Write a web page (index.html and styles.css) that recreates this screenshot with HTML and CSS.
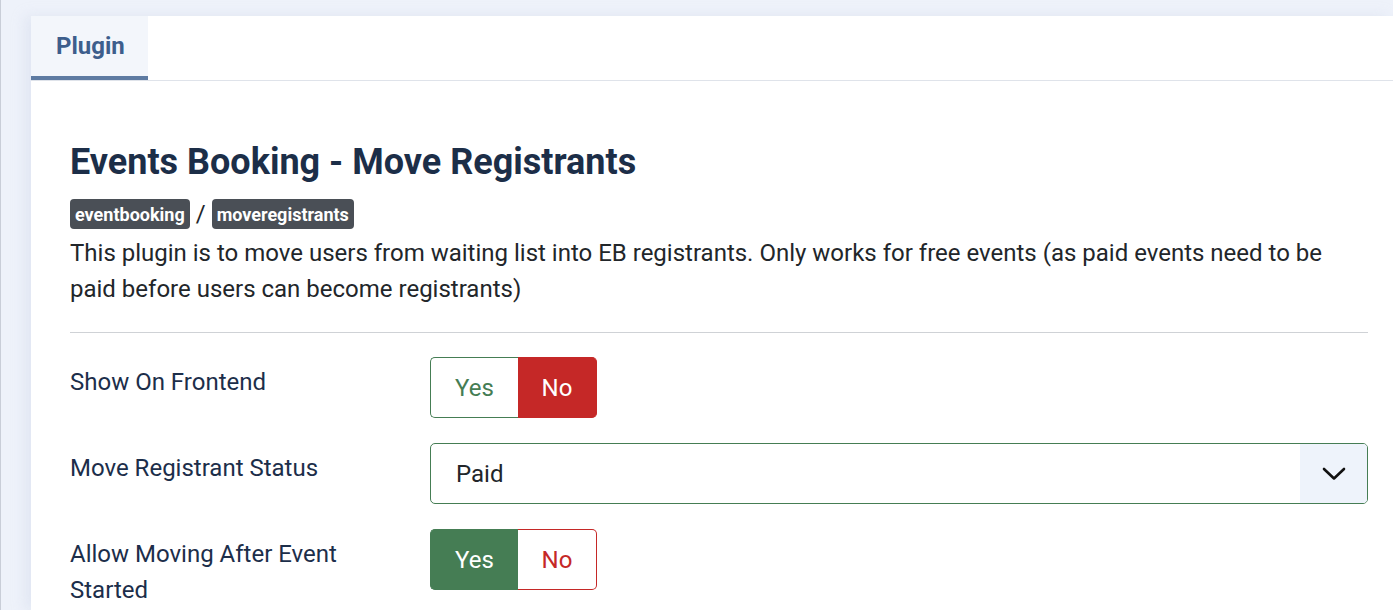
FILE: index.html
```html
<!DOCTYPE html>
<html lang="en">
<head>
<meta charset="utf-8">
<title>Events Booking - Move Registrants</title>
<link rel="stylesheet" href="styles.css">
</head>
<body>
<div class="page">
  <div class="card">
    <div class="tabs">
      <div class="tab active">Plugin</div>
    </div>
    <div class="content">
      <h2 class="title">Events Booking - Move Registrants</h2>
      <div class="badges">
        <span class="badge">eventbooking</span>
        <span class="slash">/</span>
        <span class="badge">moveregistrants</span>
      </div>
      <p class="desc">This plugin is to move users from waiting list into EB registrants. Only works for free events (as paid events need to be paid before users can become registrants)</p>
      <hr class="divider">
      <div class="form">
        <div class="label">Show On Frontend</div>
        <div class="control">
          <div class="switch">
            <span class="opt yes">Yes</span>
            <span class="opt no on">No</span>
          </div>
        </div>

        <div class="label">Move Registrant Status</div>
        <div class="control">
          <div class="select">
            <span class="select-value">Paid</span>
            <span class="select-arrow">
              <svg width="24" height="24" viewBox="0 0 24 24"><path d="M2 7 L12 16.5 L22 7" fill="none" stroke="#111" stroke-width="2.6" stroke-linecap="round" stroke-linejoin="round"/></svg>
            </span>
          </div>
        </div>

        <div class="label">Allow Moving After Event Started</div>
        <div class="control">
          <div class="switch switch-alt">
            <span class="opt yes on">Yes</span>
            <span class="opt no">No</span>
          </div>
        </div>
      </div>
    </div>
  </div>
</div>
</body>
</html>
```

FILE: styles.css
```css
html, body {
  margin: 0;
  padding: 0;
}
body {
  background: #eef2fa;
  font-family: Roboto, "Liberation Sans", Arial, sans-serif;
  color: #22262a;
  height: 610px;
  overflow: hidden;
}
.page {
  border-left: 1px solid #c9ced8;
  padding: 16px 0 0 30px;
  height: 100%;
  box-sizing: border-box;
}
.card {
  background: #fff;
  height: 100%;
  box-shadow: -6px 0 12px rgba(200, 210, 230, 0.35);
}
.tabs {
  display: flex;
  border-bottom: 1px solid #dfe3ea;
  height: 64px;
}
.tab {
  box-sizing: border-box;
  width: 117px;
  padding-left: 25px;
  background: #f3f6fb;
  border-bottom: 4px solid #5e7ba2;
  font-size: 24px;
  font-weight: 700;
  color: #3d5e8c;
  display: flex;
  align-items: center;
  height: 64px;
}
.content {
  padding: 60px 25px 0 39px;
}
.title {
  margin: 0;
  font-size: 36px;
  line-height: 43px;
  font-weight: 700;
  color: #1c2e48;
}
.badges {
  display: flex;
  align-items: center;
  gap: 6px;
  margin-top: 15px;
}
.badge {
  display: inline-flex;
  align-items: center;
  height: 30px;
  padding: 0 5px;
  border-radius: 4px;
  background: #4a4f56;
  color: #fff;
  font-size: 18px;
  font-weight: 700;
  box-sizing: border-box;
}
.slash {
  font-size: 24px;
  color: #22262a;
}
.desc {
  margin: 6px 0 0;
  font-size: 24px;
  line-height: 36px;
  color: #22262a;
}
.divider {
  border: 0;
  border-top: 1px solid #cfd2d6;
  margin: 25px 0 24px;
}
.form {
  display: grid;
  grid-template-columns: 360px 1fr;
  row-gap: 25px;
}
.label {
  font-size: 24px;
  line-height: 36px;
  color: #1c2e4a;
  padding-right: 22px;
  padding-top: 7px;
}
.control {
  display: flex;
}
.switch {
  display: flex;
  height: 61px;
  box-sizing: border-box;
}
.opt {
  display: flex;
  align-items: center;
  justify-content: center;
  font-size: 24px;
  box-sizing: border-box;
}
.opt.yes {
  width: 88px;
  border: 1px solid #457d54;
  border-right: 0;
  border-radius: 5px 0 0 5px;
  color: #457d54;
}
.opt.no {
  width: 79px;
  border: 1px solid #c52827;
  border-left: 0;
  border-radius: 0 5px 5px 0;
  color: #c52827;
}
.opt.yes.on {
  background: #457d54;
  color: #fff;
}
.opt.no.on {
  background: #c52827;
  color: #fff;
}
.select {
  flex: 1;
  display: flex;
  height: 61px;
  box-sizing: border-box;
  border: 1px solid #457d54;
  border-radius: 5px;
  overflow: hidden;
}
.select-value {
  flex: 1;
  display: flex;
  align-items: center;
  padding-left: 25px;
  font-size: 24px;
  color: #22262a;
}
.select-arrow {
  width: 67px;
  background: #eef3fb;
  display: flex;
  align-items: center;
  justify-content: center;
}
```
